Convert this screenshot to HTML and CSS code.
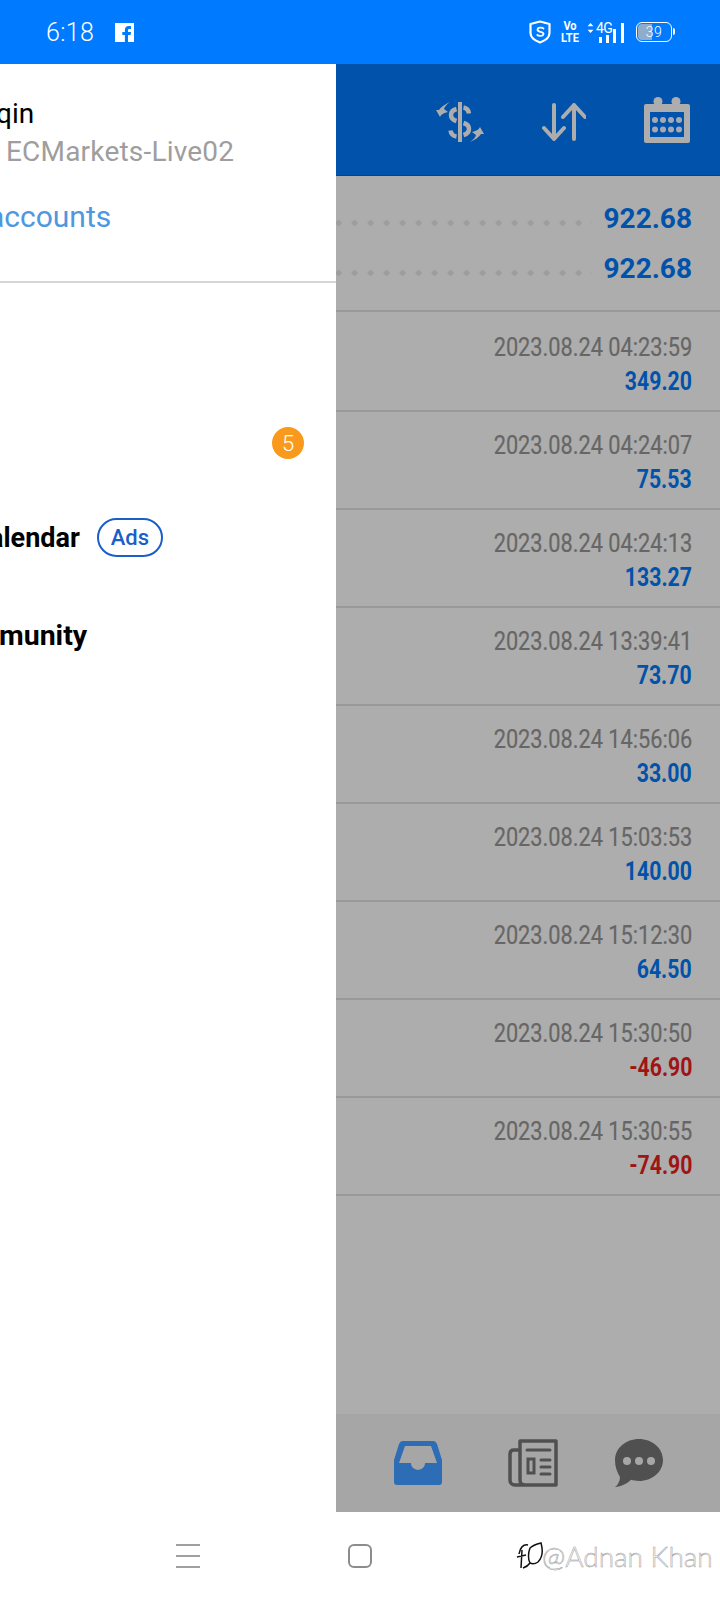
FILE: index.html
```html
<!DOCTYPE html>
<html lang="en">
<head>
<meta charset="utf-8">
<title>Journal</title>
<link rel="stylesheet" href="styles.css">
</head>
<body>
<div class="screen">
  <header class="status">
    <div class="status-left">
      <span class="clock">6:18</span>
      <svg class="fb" viewBox="0 0 19 19"><path fill="#fff" d="M0 0h19v19H0z"/><path fill="#007aff" d="M13 19v-7h2.600l.4-3h-3V7.300c0-.9.300-1.400 1.500-1.400H16V3.200c-.3 0-1.200-.1-2.300-.1-2.300 0-3.800 1.400-3.800 3.900V9H7.300v3h2.600v7z"/></svg>
    </div>
    <div class="status-right">
      <svg class="shield" viewBox="0 0 22 24"><path fill="none" stroke="#fff" stroke-width="2.200" stroke-linejoin="round" d="M11 1.500 20.500 4v9c0 4.500-4 7.500-9.500 9.500C5.500 20.500 1.500 17.500 1.500 13V4z"/><path fill="none" stroke="#fff" stroke-width="1.800" stroke-linecap="round" d="M14.500 8.500c-.8-1-5.800-1.500-6 1.200-.2 2.800 6.200 1.500 6 4.300-.2 2.500-5.200 2.200-6.200.9"/></svg>
      <div class="volte"><span>Vo</span><span>LTE</span></div>
      <div class="signal">
        <svg class="updown" viewBox="0 0 8 12"><path fill="#fff" d="M4 0l3.500 4h-7zM4 12 .5 8h7z"/></svg>
        <span class="fourg">4G</span>
        <svg class="bars" viewBox="0 0 25 20"><path fill="#fff" d="M0 14h3v6H0zM7 12h3v8H7zM14 6h3v14h-3zM22 0h3v20h-3z"/></svg>
      </div>
      <div class="battery"><span class="battery-fill"></span><span class="battery-num">39</span></div>
    </div>
  </header>

  <main class="main">
    <nav class="drawer">
      <div class="acct">
        <div class="acct-name">qin</div>
        <div class="acct-server">ECMarkets-Live02</div>
        <div class="acct-link">accounts</div>
      </div>
      <ul class="menu">
        <li class="menu-row menu-row-badge"><span class="badge">5</span></li>
        <li class="menu-row menu-row-cal"><span class="menu-text menu-cal">alendar</span><span class="ads">Ads</span></li>
        <li class="menu-row"><span class="menu-text menu-com">munity</span></li>
      </ul>
    </nav>

    <section class="panel">
      <div class="toolbar">
        <svg class="tool tool-dollar" viewBox="0 0 48 40">
          <path fill="#adadad" d="M22 0h4v40h-4z"/>
          <path fill="none" stroke="#adadad" stroke-width="4.500" d="M20.500 7c-3.500 1-5.500 3-5.500 6 0 3 2 5 5.500 6M27.500 5.500c3 .5 5 2.500 5.500 6M27.500 21c3.500 1 5.500 3 5.500 6 0 3-2 5-5.500 6M20.500 34.500c-3.500-.5-5.500-2.500-6-6"/>
          <path fill="#adadad" d="M14 0C10 3 8.500 5 8 7l4 3c-5 1-7 3-8 5L0 8h3C5 5 9 2 14 0z"/>
          <path fill="#adadad" d="M34 40c4-3 5.500-5 6-7l-4-3c5-1 7-3 8-5l4 7h-3c-2 3-6 6-11 8z"/>
        </svg>
        <svg class="tool tool-sort" viewBox="0 0 44 38">
          <path fill="none" stroke="#adadad" stroke-width="4" stroke-linecap="round" stroke-linejoin="round" d="M12 2v34M2 25l10 11 10-11M32 36V2M21 14 32 2l11 12"/>
        </svg>
        <svg class="tool tool-cal" viewBox="0 0 46 46">
          <path fill="#adadad" d="M2 7h42a2 2 0 0 1 2 2v35a2 2 0 0 1-2 2H2a2 2 0 0 1-2-2V9a2 2 0 0 1 2-2z"/>
          <circle cx="14" cy="4.500" r="4.500" fill="#adadad"/><circle cx="32" cy="4.500" r="4.500" fill="#adadad"/>
          <path fill="#0052aa" d="M6 15h34v25H6z"/>
          <g fill="#a4a9b4"><circle cx="11" cy="23" r="3"/><circle cx="19" cy="23" r="3"/><circle cx="27" cy="23" r="3"/><circle cx="35" cy="23" r="3"/><circle cx="11" cy="32.500" r="3"/><circle cx="19" cy="32.500" r="3"/><circle cx="27" cy="32.500" r="3"/><circle cx="35" cy="32.500" r="3"/></g>
        </svg>
      </div>

      <div class="totals">
        <div class="total total-a"><span class="dots"></span><span class="total-val">922.68</span></div>
        <div class="total"><span class="dots"></span><span class="total-val">922.68</span></div>
      </div>

      <ul class="deals">
        <li class="deal deal-first"><span class="deal-time">2023.08.24 04:23:59</span><span class="deal-amt">349.20</span></li>
        <li class="deal"><span class="deal-time">2023.08.24 04:24:07</span><span class="deal-amt">75.53</span></li>
        <li class="deal"><span class="deal-time">2023.08.24 04:24:13</span><span class="deal-amt">133.27</span></li>
        <li class="deal"><span class="deal-time">2023.08.24 13:39:41</span><span class="deal-amt">73.70</span></li>
        <li class="deal"><span class="deal-time">2023.08.24 14:56:06</span><span class="deal-amt">33.00</span></li>
        <li class="deal"><span class="deal-time">2023.08.24 15:03:53</span><span class="deal-amt">140.00</span></li>
        <li class="deal"><span class="deal-time">2023.08.24 15:12:30</span><span class="deal-amt">64.50</span></li>
        <li class="deal"><span class="deal-time">2023.08.24 15:30:50</span><span class="deal-amt neg">-46.90</span></li>
        <li class="deal"><span class="deal-time">2023.08.24 15:30:55</span><span class="deal-amt neg">-74.90</span></li>
      </ul>

      <div class="tabs">
        <svg class="tab tab-inbox" viewBox="0 0 48 44">
          <path fill="#2d6db5" d="M9 0h30c2 0 3 1 4 3l5 16v22c0 2-1 3-3 3H3c-2 0-3-1-3-3V19L5 3c1-2 2-3 4-3z"/>
          <path fill="#a6a6a6" d="M11 5h26l6 17H31c0 9-14 9-14 0H5z"/>
        </svg>
        <svg class="tab tab-news" viewBox="0 0 50 48">
          <path fill="none" stroke="#505050" stroke-width="3.500" stroke-linejoin="round" d="M12 2h36v44H17c-3 0-5-2-5-5zM12 11H6c-2 0-4 1-4 4v26c0 3 2 5 5 5h10"/>
          <path fill="none" stroke="#505050" stroke-width="3" stroke-linecap="round" d="M19 11h23M33 21h9M33 28h9M33 35h9"/>
          <path fill="none" stroke="#505050" stroke-width="3" d="M20 20h6v14h-6z"/>
        </svg>
        <svg class="tab tab-chat" viewBox="0 0 48 48">
          <path fill="#505050" d="M24 0c13 0 24 9 24 21s-11 21-24 21c-3 0-6-.5-8-1.200C13 44 6 48 0 48c3-2 5-6 5-10C2 33 0 28 0 21 0 9 11 0 24 0z"/>
          <circle cx="12" cy="22" r="4" fill="#a6a6a6"/><circle cx="24" cy="22" r="4" fill="#a6a6a6"/><circle cx="36" cy="22" r="4" fill="#a6a6a6"/>
        </svg>
      </div>
    </section>
  </main>

  <footer class="navbar">
    <div class="hamb"><span></span><span></span><span></span></div>
    <div class="home"></div>
    <div class="mark">
      <svg class="mark-logo" viewBox="0 0 28 32"><path fill="none" stroke="#111" stroke-width="1.500" d="M3 14c1-6 4-10 9-9M6 10l-1 18M1 17l9-2M14 8c-2 5-2 12 0 15-2 3-4 4-7 5M14 8c3-3 7-4 11-5 2 7 2 14-3 19-3 2-6 2-8 1"/></svg>
      <span class="mark-text">@Adnan Khan</span>
    </div>
  </footer>
</div>
</body>
</html>
```
FILE: styles.css
```css
* { box-sizing: border-box; }
html, body { margin: 0; padding: 0; }
body { font-family: Roboto, "Liberation Sans", sans-serif; background: #fff; }
ul { list-style: none; margin: 0; padding: 0; }
.screen { width: 720px; height: 1600px; display: flex; flex-direction: column; overflow: hidden; }

/* status bar */
.status { height: 64px; background: #007aff; display: flex; justify-content: space-between; align-items: center; color: #fff; padding: 0 48px 0 46px; flex: none; }
.status-left { display: flex; align-items: center; gap: 21px; }
.clock { font-size: 25px; font-weight: 300; letter-spacing: .3px; }
.fb { width: 19px; height: 19px; }
.status-right { display: flex; align-items: center; }
.shield { width: 22px; height: 24px; margin-right: 11px; }
.volte { display: flex; flex-direction: column; align-items: center; font-size: 13px; line-height: 12px; font-weight: 700; transform: scaleX(.85); width: 16px; margin-right: 9px; }
.signal { display: flex; align-items: flex-start; height: 22px; margin-right: 12px; }
.updown { width: 7px; height: 10px; margin: 2px 2px 0 0; }
.fourg { font-size: 14px; line-height: 12px; font-weight: 400; width: 15px; letter-spacing: -.5px; margin-top: 1px; }
.bars { width: 25px; height: 20px; margin: 2px 0 0 -12px; }
.battery { width: 36px; height: 20px; border: 1.500px solid #fff; border-radius: 6px; position: relative; display: flex; align-items: center; justify-content: center; }
.battery::after { content: ""; position: absolute; right: -4px; top: 5px; width: 2px; height: 7px; background: #fff; border-radius: 0 2px 2px 0; }
.battery-fill { position: absolute; left: 1px; top: 1px; bottom: 1px; width: 14px; background: rgba(190,190,190,.75); border-radius: 4px 0 0 4px; }
.battery-num { position: relative; font-size: 14px; font-weight: 300; letter-spacing: .5px; }

.main { flex: 1; display: flex; min-height: 0; }

/* drawer */
.drawer { width: 336px; background: #fff; flex: none; overflow: hidden; }
.acct { height: 219px; border-bottom: 2px solid #d6d6d6; padding-top: 32px; }
.acct-name { font-size: 28px; line-height: 36px; color: #000; margin-left: -4px; }
.acct-server { font-size: 28px; line-height: 36px; color: #9e9e9e; margin: 2px 0 0 6px; letter-spacing: .2px; }
.acct-link { font-size: 30px; line-height: 36px; color: #4d98e0; margin: 29px 0 0 -12px; }
.menu { padding-top: 112px; }
.menu-row { height: 96px; display: flex; align-items: center; }
.menu-row-badge { justify-content: flex-end; padding-right: 32px; }
.menu-row-cal { padding-bottom: 3px; }
.badge { width: 32px; height: 32px; border-radius: 50%; background: #fa9a1c; color: #fff; font-size: 22px; font-weight: 300; display: flex; align-items: center; justify-content: center; }
.menu-text { font-size: 28.500px; font-weight: 700; color: #000; }
.menu-cal { font-size: 27px; margin-left: -11px; }
.menu-com { margin-left: -1px; }
.ads { margin-left: 17px; width: 66px; height: 39px; border: 2px solid #1a5fc8; border-radius: 20px; color: #1a5fc8; font-size: 22px; font-weight: 500; display: flex; align-items: center; justify-content: center; }

/* dimmed panel */
.panel { flex: 1; display: flex; flex-direction: column; background: #adadad; min-width: 0; }
.toolbar { height: 112px; background: #0052aa; border-bottom: 1px solid #00458f; display: flex; align-items: center; flex: none; padding-top: 4px; }
.tool { display: block; flex: none; }
.tool-dollar { width: 48px; height: 40px; margin: 0 0 0 100px; }
.tool-sort { width: 44px; height: 38px; margin-left: 58px; }
.tool-cal { width: 46px; height: 46px; margin-left: 58px; margin-top: -4px; }

.totals { height: 136px; padding-top: 18px; border-bottom: 2px solid #999; flex: none; }
.total { height: 50px; display: flex; align-items: center; justify-content: flex-end; padding-right: 28px; }
.dots { flex: 1; height: 6px; margin: 8px 12px 0 0; background: radial-gradient(circle at 3px 3px, #9d9d9d 2.500px, transparent 3px) right center / 16px 6px repeat-x; }
.total-val { font-size: 28px; font-weight: 700; color: #0052aa; line-height: 1; }

.deal { height: 98px; border-bottom: 2px solid #999; display: flex; flex-direction: column; align-items: flex-end; justify-content: flex-start; padding: 19px 28px 0 0; }
.deal-first { height: 100px; padding-top: 21px; }
.deal-time { font-size: 25px; line-height: 29px; color: #666; transform: scaleX(.87); transform-origin: right center; white-space: nowrap; -webkit-text-stroke: .2px #666; }
.deal-amt { font-size: 25px; line-height: 29px; font-weight: 700; color: #0052aa; margin-top: 5px; transform: scaleX(.85); transform-origin: right center; }
.deal-amt.neg { color: #a01414; }

.tabs { margin-top: auto; height: 98px; background: #a6a6a6; display: flex; align-items: center; flex: none; }
.tab { flex: none; display: block; }
.tab-inbox { width: 48px; height: 44px; margin-left: 58px; }
.tab-news { width: 50px; height: 48px; margin-left: 66px; }
.tab-chat { width: 48px; height: 48px; margin-left: 57px; }

/* system nav */
.navbar { height: 88px; background: #fff; display: flex; align-items: center; flex: none; padding: 0 0 0 176px; }
.hamb { width: 24px; height: 24px; display: flex; flex-direction: column; justify-content: space-between; }
.hamb span { height: 2px; background: #a0a0a0; }
.home { width: 24px; height: 24px; border: 2px solid #8c8c8c; border-radius: 6px; margin-left: 148px; }
.mark { display: flex; align-items: center; margin-left: 144px; }
.mark-logo { width: 28px; height: 32px; }
.mark-text { font-family: Lato, Roboto, sans-serif; font-size: 28px; font-weight: 300; color: #fff; -webkit-text-stroke: .5px #999; white-space: nowrap; margin-left: -2px; }
```
